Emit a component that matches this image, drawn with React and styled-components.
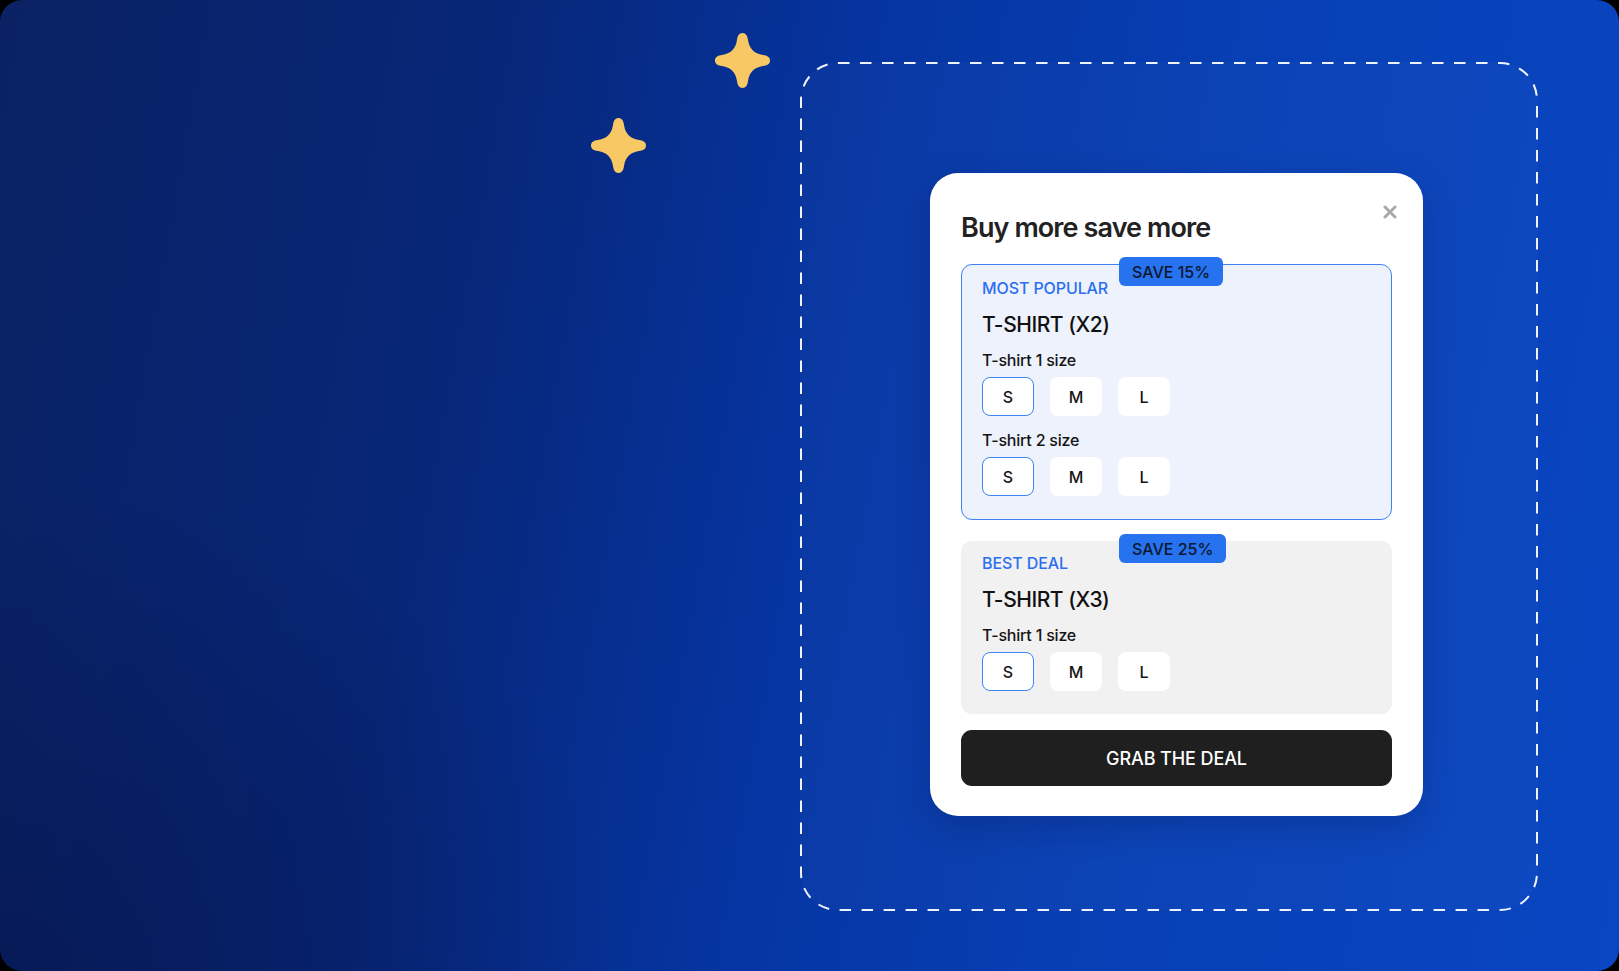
import React from "react";
import styled, { createGlobalStyle } from "styled-components";

const Global = createGlobalStyle`
  html, body { margin: 0; padding: 0; background: #000; }
  body { font-family: Inter, "Noto Sans", "Liberation Sans", sans-serif; -webkit-font-smoothing: antialiased; }
  * { box-sizing: border-box; }
`;

const Page = styled.div`
  position: relative;
  width: 1619px;
  height: 971px;
  border-radius: 22px;
  overflow: hidden;
  display: flex;
  justify-content: flex-end;
  align-items: flex-start;
  padding: 62px 81px 0 0;
  background:
    radial-gradient(ellipse 900px 700px at 0% 100%, rgba(4, 18, 70, 0.55), rgba(4, 18, 70, 0) 70%),
    linear-gradient(100deg, #0a2263 0%, #072677 28%, #0535a2 50%, #0740b6 72%, #0a46c2 100%);
`;

const Sparkle = styled.svg`
  position: absolute;
  left: ${(p) => p.$x}px;
  top: ${(p) => p.$y}px;
  width: 57px;
  height: 57px;
`;

const Frame = styled.div`
  position: relative;
  display: flex;
  padding: 111px 115px 94px 130px;
  border-radius: 38px;
  background: rgba(255, 255, 255, 0.025);
`;

const FrameOutline = styled.svg`
  position: absolute;
  inset: 0;
  width: 100%;
  height: 100%;
  overflow: visible;
  pointer-events: none;
`;

const Modal = styled.div`
  position: relative;
  width: 493px;
  background: #ffffff;
  border-radius: 28px;
  padding: 38px 31px 30px;
  box-shadow: 0 12px 34px rgba(2, 14, 60, 0.22);
  display: flex;
  flex-direction: column;
`;

const Close = styled.button`
  position: absolute;
  top: 30px;
  right: 24px;
  width: 18px;
  height: 18px;
  padding: 0;
  border: 0;
  background: none;
  display: flex;
  align-items: center;
  justify-content: center;
  cursor: pointer;
`;

const Title = styled.h2`
  margin: 0 0 19px;
  font-size: 27px;
  line-height: 34px;
  font-weight: 600;
  color: #222222;
  letter-spacing: -0.9px;
`;

const Offer = styled.div`
  position: relative;
  border-radius: 11px;
  border: 1.5px solid ${(p) => (p.$active ? "#3d83f3" : "transparent")};
  background: ${(p) => (p.$active ? "#edf2fc" : "#f1f1f1")};
  padding: ${(p) => (p.$active ? "13px 20px 23px" : "11px 20px 22px")};
  margin-bottom: ${(p) => p.$gap}px;
`;

const Badge = styled.span`
  position: absolute;
  top: -8px;
  left: 157px;
  height: 29px;
  padding: 0 13px;
  border-radius: 6px;
  background: #2772ee;
  color: #0c1730;
  font-size: 16px;
  font-weight: 500;
  display: flex;
  align-items: center;
`;

const Tag = styled.div`
  font-size: 16px;
  line-height: 20px;
  font-weight: 500;
  color: #2b6ff0;
  letter-spacing: -0.1px;
`;

const Product = styled.div`
  margin-top: 14px;
  font-size: 21px;
  line-height: 26px;
  font-weight: 500;
  color: #111111;
  letter-spacing: -0.45px;
`;

const SizeLabel = styled.div`
  margin-top: ${(p) => p.$top}px;
  font-size: 16px;
  line-height: 20px;
  font-weight: 500;
  color: #151515;
  letter-spacing: -0.2px;
`;

const Sizes = styled.div`
  display: flex;
  gap: 16px;
  margin-top: 7px;
`;

const Size = styled.button`
  width: 52px;
  height: 39px;
  border-radius: 8px;
  background: #ffffff;
  border: 1.5px solid ${(p) => (p.$selected ? "#3d83f3" : "transparent")};
  font-family: inherit;
  font-size: 16px;
  font-weight: 500;
  color: #151515;
  display: flex;
  align-items: center;
  justify-content: center;
  padding: 0;
`;

const Cta = styled.button`
  height: 56px;
  border: 0;
  border-radius: 11px;
  background: #1f1f1f;
  color: #ffffff;
  font-family: inherit;
  font-size: 18px;
  font-weight: 500;
  letter-spacing: -0.1px;
  cursor: pointer;
`;

const StarShape = () => (
  <path
    d="M28.5 1C32 1 33.5 4 34 8C35.5 17 40 21.5 49 23C53 23.5 56 25 56 28.5C56 32 53 33.5 49 34C40 35.5 35.5 40 34 49C33.5 53 32 56 28.5 56C25 56 23.5 53 23 49C21.5 40 17 35.5 8 34C4 33.5 1 32 1 28.5C1 25 4 23.5 8 23C17 21.5 21.5 17 23 8C23.5 4 25 1 28.5 1Z"
    fill="#f8c865"
  />
);

function SizeRow({ selected = "S" }) {
  return (
    <Sizes>
      {["S", "M", "L"].map((s) => (
        <Size key={s} $selected={s === selected}>
          {s}
        </Size>
      ))}
    </Sizes>
  );
}

export default function App() {
  return (
    <>
      <Global />
      <Page>
        <Sparkle $x={714} $y={32} viewBox="0 0 57 57">
          <StarShape />
        </Sparkle>
        <Sparkle $x={590} $y={117} viewBox="0 0 57 57">
          <StarShape />
        </Sparkle>

        <Frame>
          <FrameOutline>
            <rect
              x="1"
              y="1"
              width="736"
              height="847"
              rx="37"
              fill="none"
              stroke="#eef3ff"
              strokeWidth="2"
              strokeDasharray="11.5 10.5"
            />
          </FrameOutline>

          <Modal>
            <Close aria-label="Close">
              <svg width="14" height="14" viewBox="0 0 14 14">
                <path d="M2 2L12 12M12 2L2 12" stroke="#a9a9a9" strokeWidth="3" strokeLinecap="round" />
              </svg>
            </Close>
            <Title>Buy more save more</Title>

            <Offer $active $gap={21}>
              <Badge>SAVE 15%</Badge>
              <Tag>MOST POPULAR</Tag>
              <Product>T-SHIRT (X2)</Product>
              <SizeLabel $top={12}>T-shirt 1 size</SizeLabel>
              <SizeRow />
              <SizeLabel $top={14}>T-shirt 2 size</SizeLabel>
              <SizeRow />
            </Offer>

            <Offer $gap={16}>
              <Badge>SAVE 25%</Badge>
              <Tag>BEST DEAL</Tag>
              <Product>T-SHIRT (X3)</Product>
              <SizeLabel $top={12}>T-shirt 1 size</SizeLabel>
              <SizeRow />
            </Offer>

            <Cta>GRAB THE DEAL</Cta>
          </Modal>
        </Frame>
      </Page>
    </>
  );
}
